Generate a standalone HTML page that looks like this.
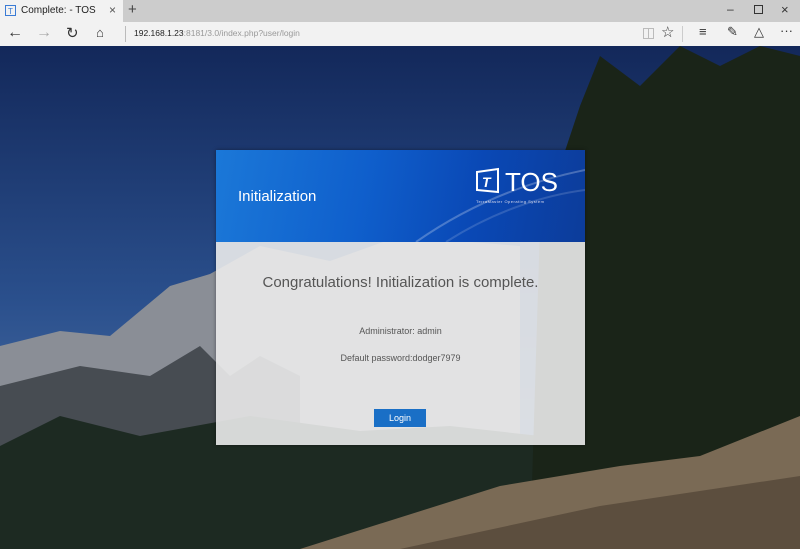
<!DOCTYPE html>
<html><head><style>
body{margin:0;width:800px;height:549px;overflow:hidden;font-family:"Liberation Sans",sans-serif;position:relative;background:#1a2d55}
.tabs{position:absolute;top:0;left:0;width:800px;height:22px;background:#cccccc}
.tab{position:absolute;left:0;top:0;width:123px;height:22px;background:#f2f2f2;font-size:10px;color:#222}
.addr{position:absolute;top:22px;left:0;width:800px;height:24px;background:#f2f2f2}
.page{position:absolute;top:46px;left:0;width:800px;height:503px;overflow:hidden}
.card{position:absolute;left:216px;top:150px;width:369px;height:295px;box-shadow:0 0 4px rgba(0,0,0,.4)}
.hd{height:92px;background:linear-gradient(100deg,#1b78d8 0%,#0f5fcc 40%,#0a48b5 70%,#0c3c9a 100%);position:relative;overflow:hidden}
.bd{height:203px;background:rgba(235,235,235,.9);text-align:center;color:#555;position:relative}
</style></head><body>
<div class="tabs">
 <div class="tab"><svg style="position:absolute;left:5px;top:5px" width="11" height="11"><rect x="0.5" y="0.5" width="10" height="10" fill="none" stroke="#3a7bd5"/><text x="3" y="9" font-size="8" fill="#3a7bd5">T</text></svg><span style="position:absolute;left:21px;top:5px">Complete: - TOS</span><span style="position:absolute;left:109px;top:3px;color:#555;font-size:12px">×</span></div>
 <span style="position:absolute;left:128px;top:1px;font-size:15px;color:#444">+</span>
 <span style="position:absolute;left:727px;top:2px;font-size:12px;color:#333">–</span>
 <div style="position:absolute;left:754px;top:5px;width:7px;height:7px;border:1px solid #333"></div>
 <span style="position:absolute;left:781px;top:2px;font-size:13px;color:#333">×</span>
</div>
<div class="addr">
 <span style="position:absolute;left:7px;top:2px;font-size:16px;color:#333">←</span>
 <span style="position:absolute;left:36px;top:2px;font-size:16px;color:#aaa">→</span>
 <span style="position:absolute;left:66px;top:2px;font-size:15px;color:#333">↻</span>
 <span style="position:absolute;left:96px;top:3px;font-size:13px;color:#333">⌂</span>
 <div style="position:absolute;left:125px;top:4px;width:1px;height:16px;background:#bbb"></div>
 <span style="position:absolute;left:134px;top:6px;font-size:8.5px;color:#222">192.168.1.23<span style="color:#999">:8181/3.0/index.php?user/login</span></span>
 <div style="position:absolute;left:643px;top:6px;width:9px;height:9px;border:1px solid #bbb;background:linear-gradient(90deg,transparent 4px,#bbb 4px,#bbb 5px,transparent 5px)"></div>
 <span style="position:absolute;left:661px;top:1px;font-size:15px;color:#333">☆</span>
 <div style="position:absolute;left:682px;top:4px;width:1px;height:16px;background:#ccc"></div>
 <span style="position:absolute;left:699px;top:2px;font-size:13px;color:#333">≡</span>
 <span style="position:absolute;left:727px;top:2px;font-size:13px;color:#333">✎</span>
 <span style="position:absolute;left:754px;top:2px;font-size:13px;color:#333">△</span>
 <span style="position:absolute;left:780px;top:1px;font-size:13px;color:#333">···</span>
</div>
<div class="page">
<svg width="800" height="503" style="position:absolute;left:0;top:0">
 <defs><linearGradient id="sky" x1="0" y1="0" x2="0" y2="1"><stop offset="0" stop-color="#13285a"/><stop offset=".5" stop-color="#2a4f8c"/><stop offset="1" stop-color="#5a7fb0"/></linearGradient></defs>
 <rect width="800" height="503" fill="url(#sky)"/>
 <polygon points="0,300 60,285 110,290 170,240 210,228 260,200 330,215 400,190 520,200 520,503 0,503" fill="#8a8e96"/>
 <polygon points="0,340 80,320 150,330 200,300 230,330 260,310 300,330 300,503 0,503" fill="#474c52"/>
 <polygon points="0,400 60,370 140,390 250,370 360,385 450,380 540,390 540,503 0,503" fill="#1d2a22"/>
 <polygon points="530,503 540,180 580,60 600,10 640,40 680,0 720,20 760,0 800,10 800,503" fill="#1a2418"/>
 <polygon points="300,503 500,440 620,420 700,410 800,370 800,503" fill="#7a6a55"/>
 <polygon points="400,503 600,460 800,430 800,503" fill="#5c4e3e"/>
</svg>
<div class="card" style="top:104px">
 <div class="hd">
  <svg width="369" height="92" style="position:absolute;left:0;top:0"><path d="M200,92 C260,50 320,30 369,20" stroke="rgba(255,255,255,.25)" fill="none" stroke-width="2"/><path d="M230,92 C280,60 330,45 369,40" stroke="rgba(255,255,255,.15)" fill="none" stroke-width="2"/>
  <path d="M261,22 L282,19 L282,42 L261,40 Z" fill="none" stroke="#fff" stroke-width="2"/><text x="266" y="37" font-size="14" font-style="italic" font-weight="bold" fill="#fff" font-family="Liberation Sans">T</text>
  <text x="289" y="41" font-size="26" fill="#fff" font-family="Liberation Sans">TOS</text>
  <text x="260" y="53" font-size="4" fill="#dde" font-family="Liberation Sans" letter-spacing=".5">TerraMaster Operating System</text></svg>
  <div style="position:absolute;left:22px;top:38px;font-size:15px;color:#fff">Initialization</div>
 </div>
 <div class="bd">
  <div style="position:absolute;top:32px;width:100%;font-size:15px;color:#555">Congratulations! Initialization is complete.</div>
  <div style="position:absolute;top:84px;width:100%;font-size:9px">Administrator: admin</div>
  <div style="position:absolute;top:111px;width:100%;font-size:9px">Default password:dodger7979</div>
  <div style="position:absolute;left:158px;top:167px;width:52px;height:18px;background:#1a6fc6;color:#fff;font-size:9px;line-height:18px">Login</div>
 </div>
</div>
</div>
</body></html>
